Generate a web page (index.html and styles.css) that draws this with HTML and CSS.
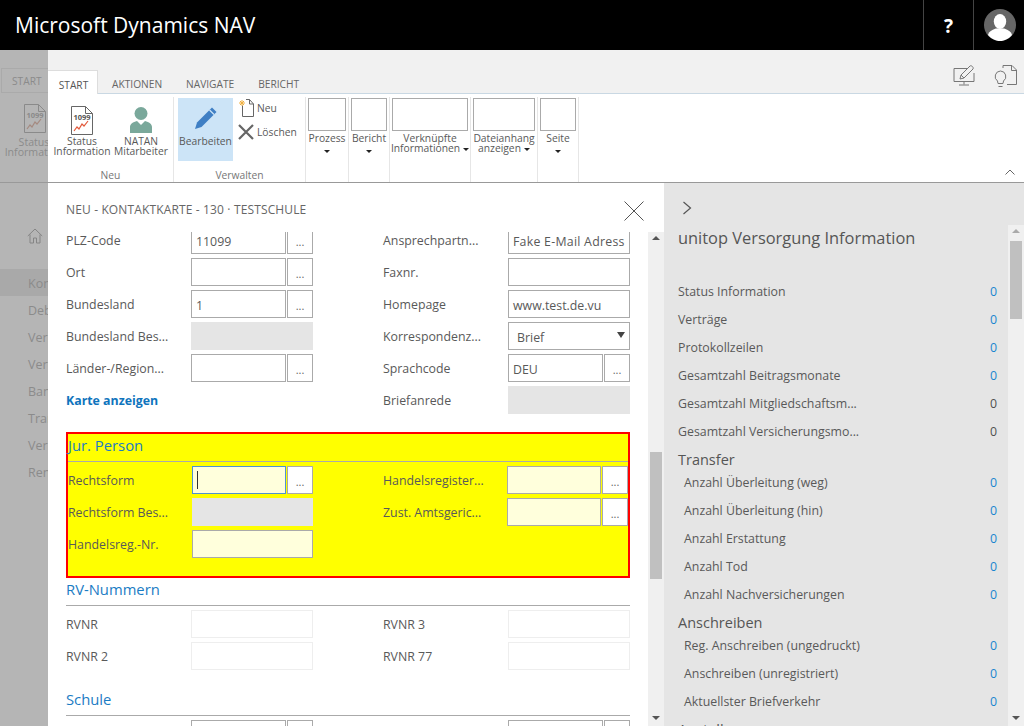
FILE: index.html
```html
<!DOCTYPE html>
<html lang="de">
<head>
  <meta charset="UTF-8">
  <meta name="viewport" content="width=device-width, initial-scale=1.0">
  <title>Microsoft Dynamics NAV</title>
  <link rel="stylesheet" href="styles.css">
</head>
<body>
  <header class="topbar">
    <div class="brand">Microsoft Dynamics NAV</div>
    <div class="help">?</div>
    <div class="user">
      <svg width="32" height="32" viewBox="0 0 32 32">
        <circle cx="16" cy="16" r="16" fill="#666"/>
        <ellipse cx="16" cy="12.5" rx="6.2" ry="7.5" fill="#fff"/>
        <path d="M4 26c1-4 6-6 8-6.500h8c2 .5 7 2.500 8 6.500-3 3.500-7.500 6-12 6s-9-2.500-12-6z" fill="#fff"/>
      </svg>
    </div>
  </header>

  <div class="stage">
    <aside class="backdrop">
      <div class="back-ribbon">
        <div class="back-tab">START</div>
        <svg class="back-icon" width="22" height="29" viewBox="0 0 22 29">
          <path d="M.5.500h14l7 7v21H.5z M14.500.5v7h7" fill="none" stroke="#8a8a8a"/>
          <text x="11" y="14" class="doc-num dim">1099</text>
          <path d="M3 25l3-4 2 2 3-5 2 2 4-5" fill="none" stroke="#a58a80" stroke-width="1.200"/>
        </svg>
        <div class="back-label">Status<br>Information</div>
      </div>
      <svg class="back-home" width="16" height="16" viewBox="0 0 16 16">
        <path d="M.8 8L8 1l7.200 7M3 6.500V15h3.500v-5h3v5H13V6.500" fill="none" stroke="#858585"/>
      </svg>
      <nav class="back-nav">
        <div class="back-item active">Kontakt</div>
        <div class="back-item">Debitor</div>
        <div class="back-item">Verkauf</div>
        <div class="back-item">Vertrag</div>
        <div class="back-item">Bank</div>
        <div class="back-item">Transfer</div>
        <div class="back-item">Verlauf</div>
        <div class="back-item">Rente</div>
      </nav>
    </aside>

    <main class="main">
      <section class="ribbon">
        <div class="tabs">
          <div class="tab active">START</div>
          <div class="tab">AKTIONEN</div>
          <div class="tab">NAVIGATE</div>
          <div class="tab">BERICHT</div>
          <div class="tab-tools">
            <svg width="24" height="24" viewBox="0 0 24 24">
              <path d="M16 4.500H2v13h20V9M12 17.500v3M7 21h10" fill="none" stroke="#777"/>
              <path d="M8 15l1-4 9-9c1-1 4 1 3 3l-9 9z M9 11l3 3" fill="none" stroke="#777"/>
            </svg>
            <svg width="24" height="24" viewBox="0 0 24 24">
              <path d="M9 4V1.500h9l4.500 4.500v14.500H13 M17.500 1.500V6.500h5" fill="none" stroke="#777"/>
              <path d="M6.500 7a5.500 5.500 0 0 0-3 10l.5 2.500h5l.5-2.500a5.500 5.500 0 0 0-3-10z M4.500 22.500h4" fill="none" stroke="#777"/>
            </svg>
          </div>
        </div>
        <div class="ribbon-body">
          <div class="group group-neu">
            <div class="group-items">
              <div class="big-btn">
                <svg width="22" height="29" viewBox="0 0 22 29">
                  <path d="M.5.500h14l7 7v21H.5z M14.500.5v7h7" fill="#fff" stroke="#666"/>
                  <text x="11" y="14" class="doc-num">1099</text>
                  <path d="M3 25l3-4 2 2 3-5 2 2 4-5" fill="none" stroke="#e2583a" stroke-width="1.200"/>
                </svg>
                <span>Status<br>Information</span>
              </div>
              <div class="big-btn">
                <svg width="24" height="29" viewBox="0 0 24 29">
                  <circle cx="12" cy="7.500" r="6.500" fill="#7aa89b"/>
                  <path d="M1 27v-6c0-3 3-5 7-6l4 4 4-4c4 1 7 3 7 6v6z" fill="#7aa89b"/>
                </svg>
                <span>NATAN<br>Mitarbeiter</span>
              </div>
            </div>
            <div class="group-name">Neu</div>
          </div>
          <div class="group group-edit">
            <div class="group-items">
              <div class="edit-btn">
                <svg width="24" height="24" viewBox="0 0 24 24">
                  <path d="M18 1.500l4.500 4.500L7.500 21 1 23l2-6.500z" fill="#3f7fc4"/>
                  <path d="M15.500 4l4.500 4.500" stroke="#cce4f7" stroke-width="1.200"/>
                </svg>
                <span>Bearbeiten</span>
              </div>
              <div class="small-btns">
                <div class="small-btn">
                  <svg width="16" height="18" viewBox="0 0 16 18">
                    <path d="M4.500 6.500v11h11V5L11.500.5H8 M11.500.5V5h4" fill="none" stroke="#666"/>
                    <path d="M4 1v6M1 4h6M2 2l4 4M6 2L2 6" stroke="#f0b040"/>
                  </svg>
                  <span>Neu</span>
                </div>
                <div class="small-btn">
                  <svg width="16" height="16" viewBox="0 0 16 16">
                    <path d="M1 1l14 14M15 1L1 15" stroke="#666" stroke-width="2.200"/>
                  </svg>
                  <span>Löschen</span>
                </div>
              </div>
            </div>
            <div class="group-name">Verwalten</div>
          </div>
          <div class="group drop w43"><div class="ph"></div><div class="drop-text">Prozess<i class="caret block"></i></div></div>
          <div class="group drop w41"><div class="ph"></div><div class="drop-text">Bericht<i class="caret block"></i></div></div>
          <div class="group drop w81"><div class="ph"></div><div class="drop-text">Verknüpfte<br>Informationen<i class="caret"></i></div></div>
          <div class="group drop w67"><div class="ph"></div><div class="drop-text">Dateianhang<br>anzeigen<i class="caret"></i></div></div>
          <div class="group drop w41"><div class="ph"></div><div class="drop-text">Seite<i class="caret block"></i></div></div>
          <svg class="collapse" width="10" height="6" viewBox="0 0 10 6"><path d="M.5 5.500L5 1l4.500 4.500" fill="none" stroke="#666"/></svg>
        </div>
      </section>

      <div class="content">
        <section class="card">
          <div class="card-head">
            <div class="card-title">NEU - KONTAKTKARTE - 130 · TESTSCHULE</div>
            <svg width="20" height="20" viewBox="0 0 20 20"><path d="M.5.500l19 19M19.500.5l-19 19" stroke="#555" fill="none"/></svg>
          </div>
          <div class="card-scroll">
            <div class="form">
              <div class="cols">
                <div class="col">
                  <div class="row"><label>PLZ-Code</label><div class="field"><div class="input">11099</div><div class="dots">...</div></div></div>
                  <div class="row"><label>Ort</label><div class="field"><div class="input"></div><div class="dots">...</div></div></div>
                  <div class="row"><label>Bundesland</label><div class="field"><div class="input">1</div><div class="dots">...</div></div></div>
                  <div class="row"><label>Bundesland Bes...</label><div class="field"><div class="input off"></div></div></div>
                  <div class="row"><label>Länder-/Region...</label><div class="field"><div class="input"></div><div class="dots">...</div></div></div>
                  <div class="row"><a class="map-link">Karte anzeigen</a></div>
                </div>
                <div class="col">
                  <div class="row"><label>Ansprechpartn...</label><div class="field"><div class="input"><span class="clip">Fake E-Mail Adresse</span></div></div></div>
                  <div class="row"><label>Faxnr.</label><div class="field"><div class="input"></div></div></div>
                  <div class="row"><label>Homepage</label><div class="field"><div class="input">www.test.de.vu</div></div></div>
                  <div class="row"><label>Korrespondenz...</label><div class="field"><div class="input select">Brief<i class="select-arrow"></i></div></div></div>
                  <div class="row"><label>Sprachcode</label><div class="field"><div class="input">DEU</div><div class="dots">...</div></div></div>
                  <div class="row"><label>Briefanrede</label><div class="field"><div class="input off"></div></div></div>
                </div>
              </div>

              <div class="section marked">
                <h2>Jur. Person</h2>
                <div class="cols">
                  <div class="col">
                    <div class="row"><label>Rechtsform</label><div class="field"><div class="input req focus"><i class="text-caret"></i></div><div class="dots">...</div></div></div>
                    <div class="row"><label>Rechtsform Bes...</label><div class="field"><div class="input off"></div></div></div>
                    <div class="row"><label>Handelsreg.-Nr.</label><div class="field"><div class="input req"></div></div></div>
                  </div>
                  <div class="col">
                    <div class="row"><label>Handelsregister...</label><div class="field"><div class="input req"></div><div class="dots">...</div></div></div>
                    <div class="row"><label>Zust. Amtsgeric...</label><div class="field"><div class="input req"></div><div class="dots">...</div></div></div>
                  </div>
                </div>
              </div>

              <div class="section">
                <h2>RV-Nummern</h2>
                <div class="cols">
                  <div class="col">
                    <div class="row"><label>RVNR</label><div class="field"><div class="input faint"></div></div></div>
                    <div class="row"><label>RVNR 2</label><div class="field"><div class="input faint"></div></div></div>
                  </div>
                  <div class="col">
                    <div class="row"><label>RVNR 3</label><div class="field"><div class="input faint"></div></div></div>
                    <div class="row"><label>RVNR 77</label><div class="field"><div class="input faint"></div></div></div>
                  </div>
                </div>
              </div>

              <div class="section spaced">
                <h2>Schule</h2>
                <div class="cols">
                  <div class="col"><div class="row"><label></label><div class="field"><div class="input"></div><div class="dots"></div></div></div></div>
                  <div class="col"><div class="row"><label></label><div class="field"><div class="input"></div><div class="dots"></div></div></div></div>
                </div>
              </div>
            </div>
            <div class="scrollbar">
              <i class="arrow up"></i>
              <div class="thumb form-thumb"></div>
              <i class="arrow down"></i>
            </div>
          </div>
        </section>

        <aside class="factbox">
          <svg class="chevron" width="10" height="14" viewBox="0 0 10 14"><path d="M1.500 1l7 6-7 6" fill="none" stroke="#555" stroke-width="1.200"/></svg>
          <div class="fact-scroll">
            <div class="facts">
              <div class="fact-title">unitop Versorgung Information</div>
              <div class="cue"><span>Status Information</span><b>0</b></div>
              <div class="cue"><span>Verträge</span><b>0</b></div>
              <div class="cue"><span>Protokollzeilen</span><b>0</b></div>
              <div class="cue"><span>Gesamtzahl Beitragsmonate</span><b>0</b></div>
              <div class="cue"><span>Gesamtzahl Mitgliedschaftsm...</span><b class="plain">0</b></div>
              <div class="cue"><span>Gesamtzahl Versicherungsmo...</span><b class="plain">0</b></div>
              <h3>Transfer</h3>
              <div class="cue sub"><span>Anzahl Überleitung (weg)</span><b>0</b></div>
              <div class="cue sub"><span>Anzahl Überleitung (hin)</span><b>0</b></div>
              <div class="cue sub"><span>Anzahl Erstattung</span><b>0</b></div>
              <div class="cue sub"><span>Anzahl Tod</span><b>0</b></div>
              <div class="cue sub"><span>Anzahl Nachversicherungen</span><b>0</b></div>
              <h3>Anschreiben</h3>
              <div class="cue sub"><span>Reg. Anschreiben (ungedruckt)</span><b>0</b></div>
              <div class="cue sub"><span>Anschreiben (unregistriert)</span><b>0</b></div>
              <div class="cue sub"><span>Aktuellster Briefverkehr</span><b>0</b></div>
              <h3>Anstellung</h3>
            </div>
            <div class="scrollbar">
              <i class="arrow up light"></i>
              <div class="thumb fact-thumb"></div>
              <i class="arrow down"></i>
            </div>
          </div>
        </aside>
      </div>
    </main>
  </div>
</body>
</html>
```

FILE: styles.css
```css
* {
  box-sizing: border-box;
}
html, body {
  height: 100%;
}
body {
  margin: 0;
  overflow: hidden;
  font-family: "Open Sans", "Noto Sans", sans-serif;
  font-size: 12.35px;
  color: #595959;
  background: #fff;
  display: flex;
  flex-direction: column;
}
svg {
  display: block;
  flex: none;
}

/* top bar */
.topbar {
  height: 50px;
  flex: none;
  background: #000;
  color: #fff;
  display: flex;
  align-items: stretch;
}
.brand {
  flex: 1;
  padding-left: 15px;
  font-size: 21px;
  line-height: 51px;
}
.help {
  width: 51px;
  border-left: 1px solid #444;
  border-right: 1px solid #444;
  text-align: center;
  font-size: 19px;
  font-weight: 700;
  line-height: 53px;
}
.user {
  width: 50px;
  padding: 9px 0 0 10px;
}

.stage {
  flex: 1;
  display: flex;
  min-height: 0;
}

/* dimmed page behind the dialog */
.backdrop {
  width: 48px;
  flex: none;
  overflow: hidden;
  background: #b5b5b5;
  color: #8b8b8b;
}
.back-ribbon {
  height: 133px;
  padding-top: 18px;
  border-bottom: 1px solid #999;
}
.back-tab {
  width: 60px;
  height: 25px;
  margin-left: 1px;
  padding-left: 10px;
  border: 1px solid #aaa;
  border-right: none;
  font-size: 10.2px;
  line-height: 25px;
}
.back-icon {
  margin: 11px 0 0 24px;
}
.back-label {
  width: 80px;
  margin-top: 4px;
  margin-left: -6px;
  text-align: center;
  font-size: 10.6px;
  line-height: 10px;
  white-space: nowrap;
}
.back-home {
  margin: 45px 0 0 27px;
}
.back-nav {
  margin-top: 25px;
}
.back-item {
  height: 27px;
  padding-left: 28px;
  font-size: 12.5px;
  line-height: 29px;
  white-space: nowrap;
}
.back-item.active {
  background: #a9a9a9;
}

.main {
  flex: 1;
  min-width: 0;
  display: flex;
  flex-direction: column;
}

/* ribbon */
.ribbon {
  flex: none;
  height: 133px;
  border-bottom: 1px solid #999;
}
.tabs {
  height: 44px;
  background: #f1f1f1;
  border-bottom: 1px solid #c9d8e3;
  display: flex;
  align-items: flex-end;
  font-size: 10.2px;
  color: #666;
}
.tab {
  height: 23px;
  margin-left: 24px;
  line-height: 28px;
}
.tab.active {
  width: 50px;
  height: 24px;
  margin: 0 -10px -1px 0;
  padding-left: 2px;
  background: #fff;
  border-top: 1px solid #ddd;
  border-right: 1px solid #ddd;
  text-align: center;
  color: #555;
}
.tab-tools {
  margin-left: auto;
  align-self: center;
  display: flex;
  gap: 18px;
  padding: 9px 6px 0 0;
}
.ribbon-body {
  height: 88px;
  padding-top: 3px;
  display: flex;
  position: relative;
}
.group {
  border-right: 1px solid #e6e6e6;
  display: flex;
  flex-direction: column;
  font-size: 10.3px;
  line-height: 10px;
}
.group-neu {
  width: 126px;
}
.group-edit {
  width: 132px;
}
.group-items {
  flex: 1;
  display: flex;
}
.group-name {
  height: 14px;
  text-align: center;
  color: #777;
  line-height: 14px;
}
.group-neu .group-items {
  padding: 9px 0 0 6px;
}
.big-btn {
  width: 56px;
  display: flex;
  flex-direction: column;
  align-items: center;
  text-align: center;
  white-space: nowrap;
  gap: 1px;
}
.big-btn + .big-btn {
  width: 62px;
}
.edit-btn {
  width: 55px;
  height: 63px;
  margin: 1px 0 0 4px;
  background: #cce4f7;
  display: flex;
  flex-direction: column;
  align-items: center;
  padding-top: 8px;
  gap: 6px;
}
.small-btns {
  margin-top: -1px;
  padding-left: 5px;
}
.small-btn {
  height: 24px;
  display: flex;
  align-items: center;
  gap: 3px;
}
.drop {
  align-items: center;
}
.w43 { width: 43px; }
.w41 { width: 41px; }
.w81 { width: 81px; }
.w67 { width: 67px; }
.ph {
  height: 33px;
  margin-top: 1px;
  align-self: stretch;
  margin-left: 2px;
  margin-right: 2px;
  border: 1px solid #aaa;
}
.drop-text {
  margin-top: 2px;
  text-align: center;
  white-space: nowrap;
}
.caret {
  display: inline-block;
  margin-left: 3px;
  vertical-align: middle;
  border: 3px solid transparent;
  border-top: 3px solid #222;
  border-bottom: none;
}
.caret.block {
  display: block;
  width: 6px;
  margin: 7px auto 0;
}
.collapse {
  position: absolute;
  right: 9px;
  bottom: 7px;
}

.content {
  flex: 1;
  min-height: 0;
  display: flex;
}

/* card */
.card {
  width: 616px;
  flex: none;
  display: flex;
  flex-direction: column;
  background: #fff;
}
.card-head {
  height: 49px;
  flex: none;
  padding: 18px 20px 0 18px;
  display: flex;
  justify-content: space-between;
}
.card-title {
  font-size: 12px;
  letter-spacing: .14px;
  line-height: 18px;
  color: #666;
}
.card-scroll {
  flex: 1;
  min-height: 0;
  display: flex;
}
.form {
  flex: 1;
  min-width: 0;
  padding: 0 18px;
  overflow: hidden;
}
.cols {
  display: grid;
  grid-template-columns: minmax(0, 1fr) minmax(0, 1fr);
  column-gap: 70px;
}
.cols:first-child {
  margin-top: -6px;
}
.row {
  height: 28px;
  margin-bottom: 4px;
  display: grid;
  grid-template-columns: 125px minmax(0, 1fr);
  align-items: center;
}
.row label {
  white-space: nowrap;
  padding-top: 1px;
}
.map-link {
  grid-column: 1 / 3;
  font-weight: 700;
  color: #0f74bd;
}
.field {
  height: 28px;
  min-width: 0;
  display: flex;
  gap: 1px;
}
.input {
  flex: 1;
  min-width: 0;
  height: 28px;
  padding: 0 4px;
  border: 1px solid #aaa;
  background: #fff;
  line-height: 30px;
  white-space: nowrap;
  overflow: hidden;
}
.clip {
  display: block;
  overflow: hidden;
  letter-spacing: .25px;
}
.input.off {
  background: #e5e5e5;
  border-color: #e5e5e5;
}
.input.faint {
  border-color: #eee;
}
.input.req {
  background: #ffffdc;
}
.input.focus {
  border-color: #4f93d1;
  position: relative;
}
.text-caret {
  position: absolute;
  left: 4px;
  top: 4px;
  width: 1px;
  height: 18px;
  background: #333;
}
.input.select {
  padding-left: 8px;
  position: relative;
}
.select-arrow {
  position: absolute;
  right: 4px;
  top: 9px;
  border: 4px solid transparent;
  border-top: 6px solid #444;
  border-bottom: none;
}
.dots {
  width: 26px;
  flex: none;
  border: 1px solid #aaa;
  background: #fff;
  text-align: center;
  font-size: 11px;
  line-height: 29px;
  color: #666;
}
.section h2 {
  margin: 0 0 4px;
  height: 28px;
  border-bottom: 1px solid #aaa;
  font-size: 14.8px;
  font-weight: 400;
  line-height: 23px;
  color: #1a7cc4;
}
.section.marked {
  margin-top: 14px;
  padding-bottom: 14px;
  border: 2px solid #f00;
  background: #ff0;
}
.section.marked .row {
  grid-template-columns: 124px minmax(0, 1fr);
}
.section.spaced {
  margin-top: 14px;
}

/* scrollbars */
.scrollbar {
  width: 16px;
  flex: none;
  position: relative;
  background: #f0f0f0;
}
.thumb {
  position: absolute;
  left: 2px;
  width: 12px;
  background: #c0c0c0;
}
.form-thumb {
  top: 220px;
  height: 127px;
}
.fact-thumb {
  top: 16px;
  height: 78px;
}
.arrow {
  position: absolute;
  left: 4px;
  border: 4px solid transparent;
}
.arrow.up {
  top: 4px;
  border-bottom: 4px solid #555;
  border-top: none;
}
.arrow.up.light {
  border-bottom-color: #aaa;
}
.arrow.down {
  bottom: 6px;
  border-top: 4px solid #555;
  border-bottom: none;
}

/* factbox */
.factbox {
  flex: 1;
  min-width: 0;
  display: flex;
  flex-direction: column;
  background: #e5e5e5;
}
.chevron {
  margin: 18px 0 10px 18px;
}
.fact-scroll {
  flex: 1;
  min-height: 0;
  display: flex;
}
.facts {
  flex: 1;
  min-width: 0;
  padding: 0 11px 0 14px;
  overflow: hidden;
}
.fact-title {
  height: 53px;
  font-size: 16.4px;
  line-height: 26px;
  color: #555;
}
.cue {
  height: 28px;
  display: flex;
  justify-content: space-between;
  line-height: 28px;
}
.cue.sub {
  padding-left: 6px;
}
.cue b {
  font-weight: 400;
  color: #1a85d0;
}
.cue b.plain {
  color: #505050;
}
.facts h3 {
  margin: 0;
  height: 23px;
  font-size: 14.5px;
  font-weight: 400;
  line-height: 28px;
  color: #555;
}
.doc-num {
  font-family: "Open Sans", sans-serif;
  font-size: 7.5px;
  font-weight: 700;
  text-anchor: middle;
  fill: #555;
}
.doc-num.dim {
  fill: #8a8a8a;
}
```
